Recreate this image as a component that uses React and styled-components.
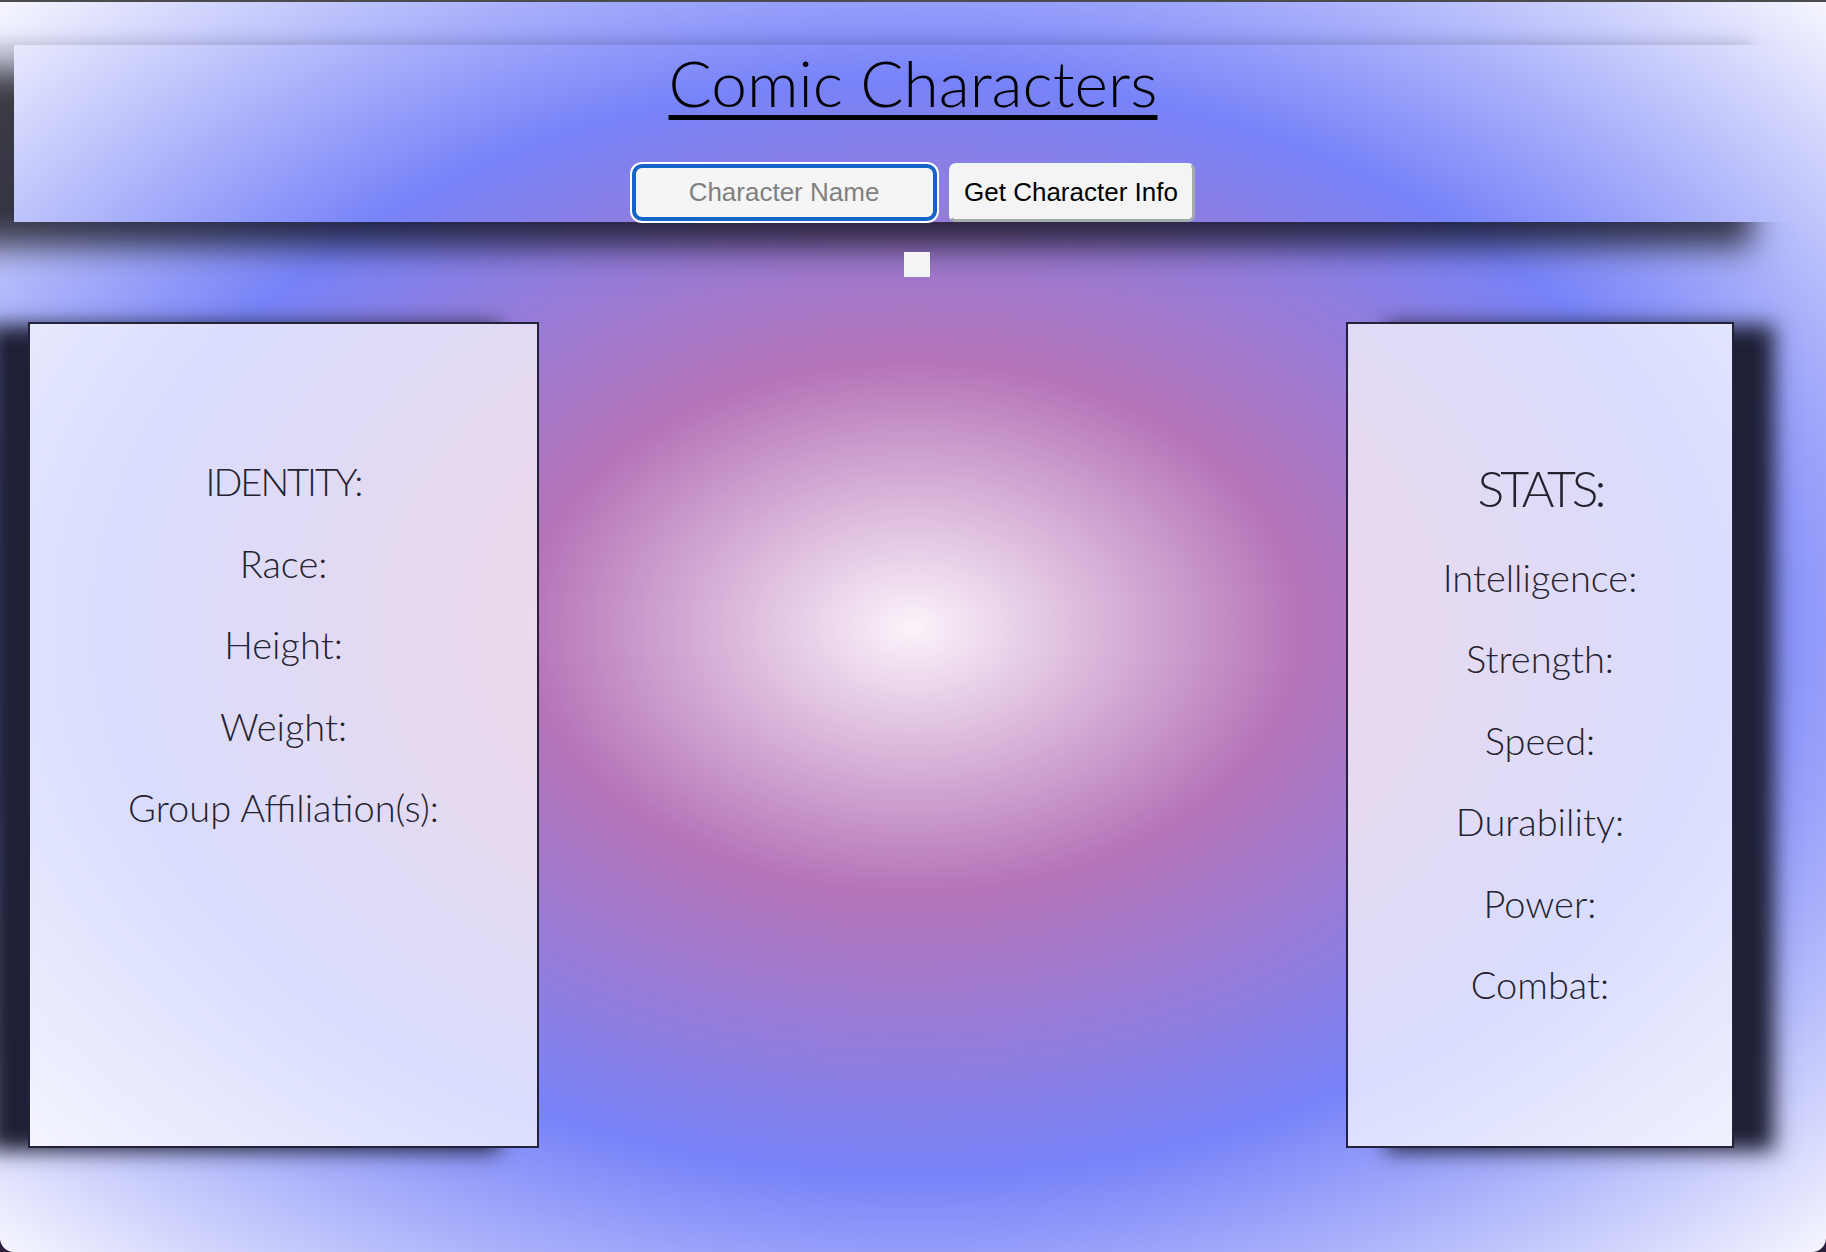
import React from "react";
import styled, { createGlobalStyle } from "styled-components";

const GlobalStyle = createGlobalStyle`
  html, body {
    margin: 0;
    padding: 0;
    background: #2b1d3c;
  }
  body {
    font-family: "Lato", "Liberation Sans", sans-serif;
  }
  * {
    box-sizing: border-box;
  }
`;

const Page = styled.div`
  min-height: 100vh;
  border-top: 2px solid #4b4b4d;
  border-radius: 0 0 14px 14px;
  overflow: hidden;
  padding-top: 43px;
  background: radial-gradient(
    ellipse farthest-corner at 50% 50%,
    #fbf3fa 0%,
    #b574b8 30%,
    #7783f8 62%,
    #f6f6fe 100%
  );
`;

const Header = styled.header`
  margin: 0 14px;
  height: 177px;
  padding-top: 6px;
  display: flex;
  flex-direction: column;
  align-items: center;
  box-shadow: -60px 25px 30px rgba(0, 0, 0, 0.7), -60px -5px 12px rgba(0, 0, 0, 0.1);
`;

const Title = styled.h1`
  margin: 0;
  font-family: "Lato", sans-serif;
  font-weight: 300;
  font-size: 64px;
  line-height: 1;
  color: #000;
  text-decoration: underline;
  text-decoration-thickness: 5px;
  text-underline-offset: 8px;
`;

const SearchForm = styled.form`
  margin-top: 48px;
  display: flex;
  align-items: center;
  gap: 12px;
`;

const NameInput = styled.input`
  width: 305px;
  height: 57px;
  border: 4px solid #1565c8;
  border-radius: 10px;
  box-shadow: 0 0 0 2px #ffffff;
  background: #f5f5f5;
  outline: none;
  text-align: center;
  font-family: "Liberation Sans", Arial, sans-serif;
  font-size: 26px;
  color: #000;

  &::placeholder {
    color: #808080;
  }
`;

const InfoButton = styled.button`
  width: 246px;
  height: 59px;
  padding: 0;
  border-style: solid;
  border-width: 2px 3px 3px 2px;
  border-color: #eefbfb #a3abab #a3abab #eefbfb;
  border-radius: 7px;
  background: #f4f4f4;
  font-family: "Liberation Sans", Arial, sans-serif;
  font-size: 26px;
  color: #000;
`;

const PortraitSlot = styled.div`
  margin-top: 30px;
  padding-left: 8px;
  display: flex;
  justify-content: center;
`;

const Portrait = styled.div`
  width: 26px;
  height: 25px;
  background: #f4f4f6;
`;

const CardRow = styled.main`
  margin-top: 45px;
  padding: 0 92px 0 28px;
  display: flex;
  justify-content: space-between;
  align-items: flex-start;
`;

const Card = styled.section`
  width: ${(p) => p.$width}px;
  height: 826px;
  padding-top: 134px;
  border: 2px solid #23223a;
  background: rgba(255, 255, 255, 0.72);
  box-shadow: ${(p) => (p.$side === "left" ? "-40px" : "40px")} 3px 20px #1e2035;
  display: flex;
  flex-direction: column;
  align-items: center;
  gap: 35.5px;
`;

const Label = styled.h3`
  margin: 0;
  font-family: "Lato", sans-serif;
  font-weight: 300;
  font-size: ${(p) => (p.$big ? 50 : 38)}px;
  line-height: ${(p) => (p.$big ? 60 : 46)}px;
  letter-spacing: ${(p) => (p.$big ? "-4px" : p.$caps ? "-2px" : "0")};
  color: #24222f;
  white-space: nowrap;
`;

const identity = ["Race:", "Height:", "Weight:", "Group Affiliation(s):"];
const stats = ["Intelligence:", "Strength:", "Speed:", "Durability:", "Power:", "Combat:"];

export default function App() {
  return (
    <>
      <GlobalStyle />
      <Page>
        <Header>
          <Title>Comic Characters</Title>
          <SearchForm onSubmit={(e) => e.preventDefault()}>
            <NameInput type="text" placeholder="Character Name" />
            <InfoButton type="submit">Get Character Info</InfoButton>
          </SearchForm>
        </Header>
        <PortraitSlot>
          <Portrait />
        </PortraitSlot>
        <CardRow>
          <Card $width={511} $side="left">
            <Label $caps>IDENTITY:</Label>
            {identity.map((item) => (
              <Label key={item}>{item}</Label>
            ))}
          </Card>
          <Card $width={388} $side="right">
            <Label $big>STATS:</Label>
            {stats.map((item) => (
              <Label key={item}>{item}</Label>
            ))}
          </Card>
        </CardRow>
      </Page>
    </>
  );
}
